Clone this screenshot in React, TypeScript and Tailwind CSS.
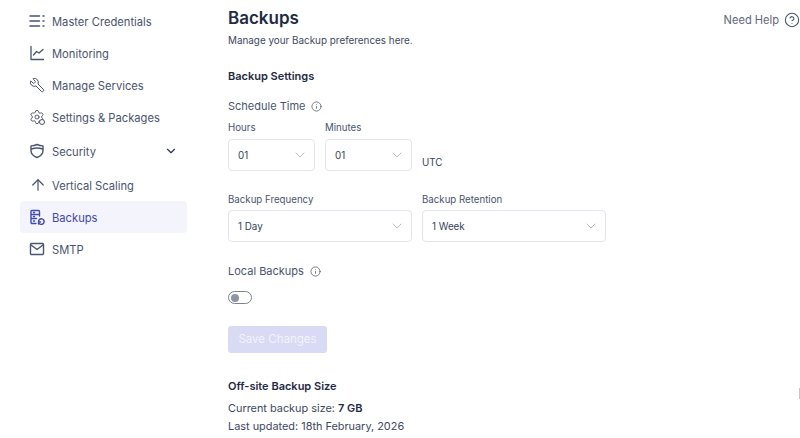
import { ArrowUp, ChevronDown, CircleHelp, Info, Settings, Wrench } from "lucide-react";
import type { ReactNode } from "react";

function ListIcon() {
  return (
    <svg viewBox="0 0 16 16" className="size-4" fill="none" stroke="currentColor" strokeWidth="1.5" strokeLinecap="round">
      <path d="M1 3h9.5M1 8h9.5M1 13h9.5M14 3h1M14 8h1M14 13h1" />
    </svg>
  );
}

function ChartIcon() {
  return (
    <svg viewBox="0 0 16 16" className="size-4" fill="none" stroke="currentColor" strokeWidth="1.3" strokeLinecap="round" strokeLinejoin="round">
      <path d="M2 1.5v13h12.5M4.5 10l3-3.5 2.5 1.5 4-3.5" />
    </svg>
  );
}

function ShieldIcon() {
  return (
    <svg viewBox="0 0 16 16" className="size-4" fill="none" stroke="currentColor" strokeWidth="1.4" strokeLinecap="round" strokeLinejoin="round">
      <path d="M8 1.5c2 1 4 1.4 6 1.4v4.6c0 3.4-2.4 5.6-6 7-3.6-1.4-6-3.6-6-7V2.900c2 0 4-.4 6-1.400z" />
      <path d="M2.500 6c3.500-1.300 7.500-1.300 11 0" />
    </svg>
  );
}

function GearBadgeIcon() {
  return (
    <span className="relative block size-4">
      <Settings className="size-4" strokeWidth={1.4} />
      <span className="absolute right-0 bottom-0 size-[6px] rounded-full border border-current bg-white" />
    </span>
  );
}

function BackupIcon() {
  return (
    <svg viewBox="0 0 16 16" className="size-4" fill="none" stroke="currentColor" strokeWidth="1.4" strokeLinecap="round" strokeLinejoin="round">
      <path d="M7 14.500H3a1 1 0 0 1-1-1v-11a1 1 0 0 1 1-1h6.500a1 1 0 0 1 1 1V7M2 5.500h8.500M2 9.500h5.500M4.500 3.500h1M4.500 7.500h1M4.500 12h1" />
      <path d="M9.500 12.500a2.800 2.800 0 1 1 1 2.200M9.500 15v-2h2" />
    </svg>
  );
}

function MailIcon() {
  return (
    <svg viewBox="0 0 16 16" className="size-4" fill="none" stroke="currentColor" strokeWidth="1.4" strokeLinecap="round" strokeLinejoin="round">
      <rect x="1.500" y="2.500" width="13" height="11" rx="1" />
      <path d="M2 4l6 4.500L14 4" />
    </svg>
  );
}

const NAV: { label: string; icon: ReactNode; h: string; more?: boolean; active?: boolean }[] = [
  { label: "Master Credentials", icon: <ListIcon />, h: "h-8" },
  { label: "Monitoring", icon: <ChartIcon />, h: "h-8" },
  { label: "Manage Services", icon: <Wrench className="size-4 -scale-x-100" strokeWidth={1.5} />, h: "h-8" },
  { label: "Settings & Packages", icon: <GearBadgeIcon />, h: "h-8" },
  { label: "Security", icon: <ShieldIcon />, h: "h-9", more: true },
  { label: "Vertical Scaling", icon: <ArrowUp className="size-[18px]" strokeWidth={1.6} />, h: "h-8" },
  { label: "Backups", icon: <BackupIcon />, h: "h-8", active: true },
  { label: "SMTP", icon: <MailIcon />, h: "h-8" },
];

function Select({ value, width }: { value: string; width: string }) {
  return (
    <div className={`flex h-8 items-center justify-between rounded border border-[#e3e4ee] bg-white pr-[6px] pl-[9px] text-[9.8px] text-[#353f5c] ${width}`}>
      <span className="pt-[2px]">{value}</span>
      <ChevronDown className="size-4 text-[#b4b7c5]" strokeWidth={1.4} />
    </div>
  );
}

function Label({ children, tight }: { children: ReactNode; tight?: boolean }) {
  return <p className={`${tight ? "mb-[3px]" : "mb-[4px]"} text-[9.7px] leading-[14px] text-[#4a5370]`}>{children}</p>;
}

export default function App() {
  return (
    <div className="relative flex h-[438px] w-[800px] overflow-hidden bg-white font-['Inter',sans-serif] text-[#2c3650]">
      <aside className="w-[228px] shrink-0 pt-[5px] pl-5">
        <ul className="w-[167px]">
          {NAV.map((item) => (
            <li
              key={item.label}
              className={`flex items-center rounded pl-[9px] text-[11.2px] ${item.h} ${
                item.active ? "bg-[#f4f5fc] text-[#3f48b5]" : "text-[#4a5370]"
              }`}
            >
              <span className="flex w-[23px] shrink-0 justify-start">{item.icon}</span>
              <span className="pt-[3px]">{item.label}</span>
              {item.more && <ChevronDown className="mr-[9px] ml-auto size-3.5 text-[#2c3650]" strokeWidth={2} />}
            </li>
          ))}
        </ul>
      </aside>

      <main className="min-w-0 flex-1">
        <div className="flex items-start justify-between">
          <div>
            <h1 className="mt-[6px] text-[17px] leading-6 font-semibold text-[#1f2a44]">Backups</h1>
            <p className="mt-[3px] text-[9.9px] leading-[14px] text-[#3e4763]">Manage your Backup preferences here.</p>
          </div>
          <div className="mt-[12px] flex items-center gap-[5px] text-[11.1px] leading-4 text-[#5f6880]">
            <span>Need Help</span>
            <CircleHelp className="size-[16px] text-[#4a5370]" strokeWidth={1.6} />
          </div>
        </div>

        <h2 className="mt-[21px] text-[11px] leading-4 font-semibold text-[#1f2a44]">Backup Settings</h2>

        <div className="mt-[14px] flex items-center gap-[6px] text-[11px] leading-4 text-[#4a5370]">
          <span>Schedule Time</span>
          <Info className="size-[11px]" strokeWidth={1.6} />
        </div>

        <div className="mt-[7px] flex items-end gap-[10px]">
          <div>
            <Label>Hours</Label>
            <Select value="01" width="w-[87px]" />
          </div>
          <div>
            <Label>Minutes</Label>
            <Select value="01" width="w-[87px]" />
          </div>
          <span className="pb-[1px] text-[9.8px] leading-[14px] text-[#353f5c]">UTC</span>
        </div>

        <div className="mt-[22px] flex gap-[10px]">
          <div>
            <Label tight>Backup Frequency</Label>
            <Select value="1 Day" width="w-[184px]" />
          </div>
          <div>
            <Label tight>Backup Retention</Label>
            <Select value="1 Week" width="w-[184px]" />
          </div>
        </div>

        <div className="mt-[21px] flex items-center gap-[6px] text-[11px] leading-4 text-[#4a5370]">
          <span>Local Backups</span>
          <Info className="size-[11px]" strokeWidth={1.6} />
        </div>

        <div className="mt-[12px] flex h-[13px] w-6 items-center rounded-full border-[1.5px] border-[#7b8298] pl-[2px]">
          <span className="size-2 rounded-full bg-[#8f95a8]" />
        </div>

        <button className="mt-[22px] flex h-[27px] w-[99px] items-center justify-center rounded-[3px] bg-[#d9daf3] text-[11.5px] text-[#f3f3fb]">
          Save Changes
        </button>

        <h2 className="mt-[25px] text-[11px] leading-4 font-semibold text-[#1f2a44]">Off-site Backup Size</h2>
        <p className="mt-[5px] text-[10.9px] leading-[18px] text-[#3e4763]">
          Current backup size: <span className="font-semibold text-[#1f2a44]">7 GB</span>
        </p>
        <p className="text-[10.9px] leading-[18px] text-[#3e4763]">Last updated: 18th February, 2026</p>
      </main>

      <div className="absolute top-[388px] right-0 h-[11px] w-px bg-[#c4c4cc]" />
    </div>
  );
}
